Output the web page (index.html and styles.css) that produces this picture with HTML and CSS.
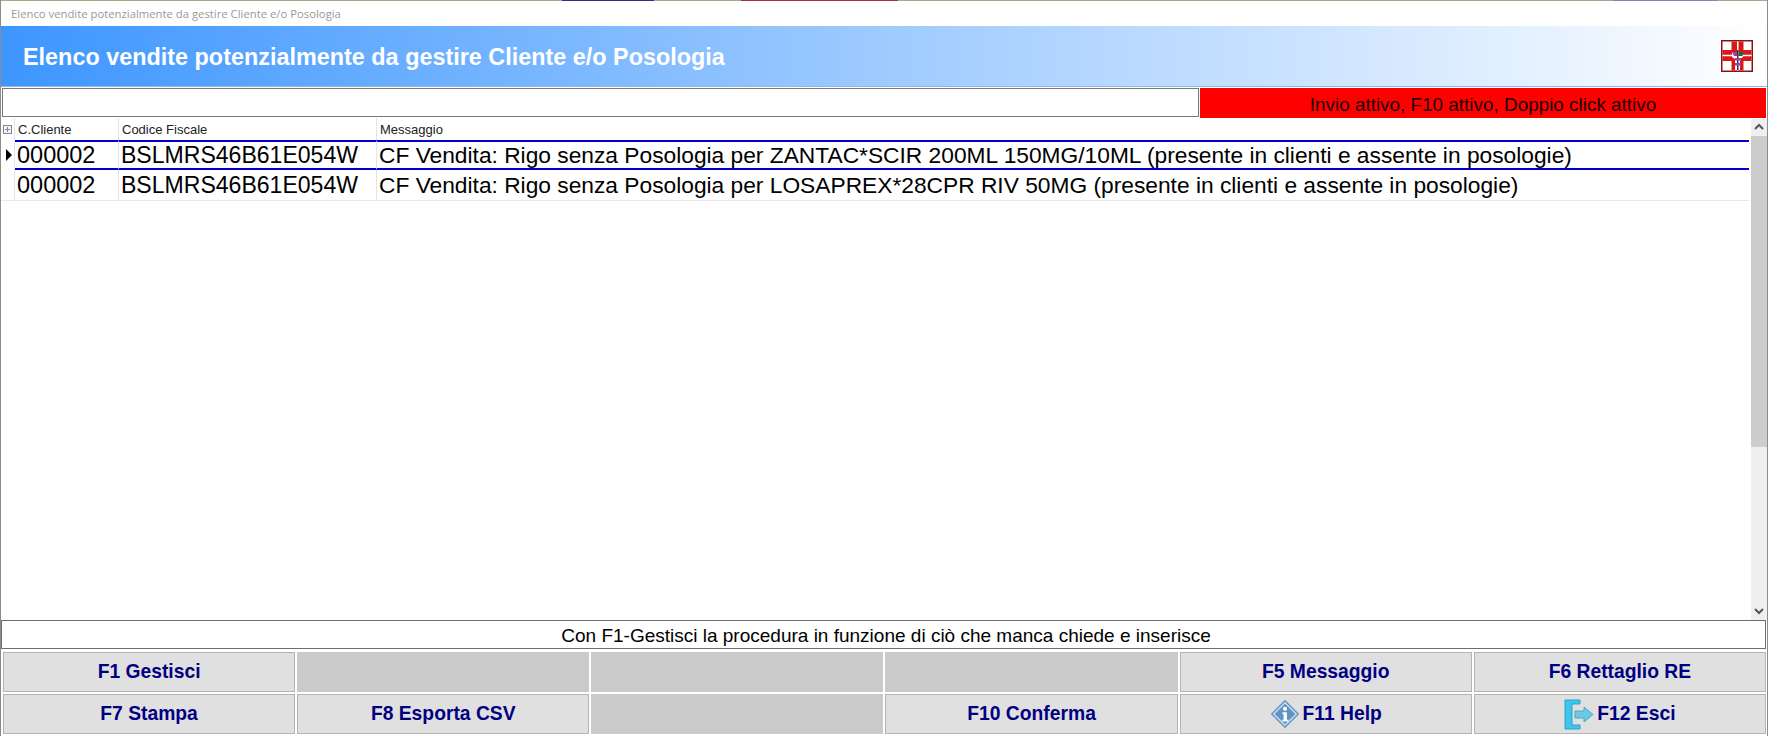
FILE: index.html
```html
<!DOCTYPE html>
<html lang="it">
<head>
  <meta charset="UTF-8">
  <title>Elenco vendite potenzialmente da gestire Cliente e/o Posologia</title>
  <link rel="stylesheet" href="styles.css">
</head>
<body>
  <div class="window">
    <div class="behind"></div>
    <div class="titlebar">Elenco vendite potenzialmente da gestire Cliente e/o Posologia</div>

    <div class="banner">
      <h1>Elenco vendite potenzialmente da gestire Cliente e/o Posologia</h1>
      <svg class="logo" width="32" height="32" viewBox="0 0 32 32">
        <rect x="0.75" y="0.75" width="30.5" height="30.5" fill="#fff" stroke="#8c1010" stroke-width="1.5"/>
        <rect x="10.500" y="1.500" width="12" height="29" fill="#d81818"/>
        <rect x="1.500" y="10" width="29" height="11" fill="#d81818"/>
        <rect x="16" y="1.500" width="1.500" height="29" fill="#fff"/>
        <rect x="1.500" y="14.750" width="29" height="1.500" fill="#fff"/>
        <path d="M11 12h11v5l-3 2v11h-5V19l-3-2z" fill="#fff"/>
        <rect x="16" y="10" width="1.500" height="20" fill="#333"/>
        <path d="M11 12h5v4h-3z" fill="#b030c0"/>
        <path d="M17.500 12h5l-1 4h-4z" fill="#1c6a30"/>
        <path d="M14 18h6v2.500h-6zM14 23h6v2.500h-6z" fill="#a040b0"/>
      </svg>
    </div>

    <div class="filter-row">
      <div class="filter-box"></div>
      <div class="filter-status">Invio attivo, F10 attivo, Doppio click attivo</div>
    </div>

    <div class="grid-area">
      <div class="grid">
        <div class="grid-head">
          <div class="col-mark">
            <span class="expander"></span>
          </div>
          <div class="col-code">C.Cliente</div>
          <div class="col-cf">Codice Fiscale</div>
          <div class="col-msg">Messaggio</div>
        </div>
        <div class="grid-row selected">
          <div class="col-mark"><span class="pointer"></span></div>
          <div class="col-code">000002</div>
          <div class="col-cf">BSLMRS46B61E054W</div>
          <div class="col-msg">CF Vendita: Rigo senza Posologia per ZANTAC*SCIR 200ML 150MG/10ML (presente in clienti e assente in posologie)</div>
        </div>
        <div class="grid-row">
          <div class="col-mark"></div>
          <div class="col-code">000002</div>
          <div class="col-cf">BSLMRS46B61E054W</div>
          <div class="col-msg">CF Vendita: Rigo senza Posologia per LOSAPREX*28CPR RIV 50MG (presente in clienti e assente in posologie)</div>
        </div>
      </div>
      <div class="scrollbar">
        <svg class="arrow" width="16" height="17" viewBox="0 0 16 17">
          <path d="M4 10l4-4 4 4" fill="none" stroke="#555" stroke-width="2"/>
        </svg>
        <div class="thumb"></div>
        <div class="track"></div>
        <svg class="arrow" width="16" height="17" viewBox="0 0 16 17">
          <path d="M4 6l4 4 4-4" fill="none" stroke="#555" stroke-width="2"/>
        </svg>
      </div>
    </div>

    <div class="hint">Con F1-Gestisci la procedura in funzione di ciò che manca chiede e inserisce</div>

    <div class="buttons">
      <div class="btn">F1 Gestisci</div>
      <div class="btn off"></div>
      <div class="btn off"></div>
      <div class="btn off"></div>
      <div class="btn">F5 Messaggio</div>
      <div class="btn">F6 Rettaglio RE</div>
      <div class="btn">F7 Stampa</div>
      <div class="btn">F8 Esporta CSV</div>
      <div class="btn off"></div>
      <div class="btn">F10 Conferma</div>
      <div class="btn">
        <svg width="30" height="30" viewBox="0 0 32 32">
          <path d="M16 1l15 15-15 15L1 16z" fill="#5f93c4" stroke="#8fa9c0"/>
          <path d="M16 4l12 12-12 12L4 16z" fill="none" stroke="#c9dff2" stroke-width="1.500"/>
          <circle cx="16" cy="10.500" r="2.200" fill="#fff"/>
          <path d="M13.500 14h4.500v8h1.500v2h-6.500v-2h1.500v-6h-1.500z" fill="#fff"/>
        </svg>
        <span>F11 Help</span>
      </div>
      <div class="btn">
        <svg width="30" height="31" viewBox="0 0 30 31">
          <path d="M1 1h15v4H8v21h8v4H1z" fill="#40c4ea" stroke="#25a5cf"/>
          <path d="M11 12h9V8l9 7.500-9 7.500v-4h-9z" fill="#6cc9e6" stroke="#47a9cc"/>
        </svg>
        <span>F12 Esci</span>
      </div>
    </div>
  </div>
</body>
</html>
```

FILE: styles.css
```css
/* Window frame */
html, body {
  margin: 0;
  height: 100%;
  background-color: #fff;
}

.window {
  display: flex;
  flex-direction: column;
  width: 1768px;
  height: 736px;
  box-sizing: border-box;
  border-left: 1px solid #8c8c8c;
  border-right: 1px solid #8c8c8c;
  font-family: "Liberation Sans", Arial, sans-serif;
  color: #000;
  overflow: hidden;
}

/* sliver of whatever sits behind the window */
.behind {
  flex: none;
  height: 1px;
  background: linear-gradient(to right,
    #a8a88c 561px, #2f2f80 561px, #2f2f80 653px,
    #a8a88c 653px, #a8a88c 740px, #a03040 740px, #a03040 897px,
    #a8a88c 897px, #a8a88c 1612px, #8088a8 1612px, #8088a8 1717px,
    #a8a88c 1717px);
}

.titlebar {
  height: 25px;
  line-height: 25px;
  padding-left: 10px;
  font-family: "Open Sans", sans-serif;
  font-size: 11.300px;
  color: #999;
}

/* Blue banner */
.banner {
  display: flex;
  align-items: center;
  justify-content: space-between;
  height: 61px;
  padding: 0 14px 0 22px;
  background: linear-gradient(to right, #3d96ff, #fff);
  border-bottom: 1px solid #8fb8e0;
  box-sizing: border-box;
}

.banner h1 {
  margin: 2px 0 0;
  font-size: 23.400px;
  font-weight: bold;
  color: #fff;
}

.logo {
  display: block;
}

/* Search row */
.filter-row {
  display: flex;
  gap: 1px;
  height: 31px;
  padding: 1px 1px 0;
  box-sizing: border-box;
}

.filter-box {
  width: 1197px;
  height: 29px;
  box-sizing: border-box;
  background-color: #fff;
  border: 1px solid #7a7a7a;
}

.filter-status {
  flex: 1;
  height: 30px;
  line-height: 33px;
  text-align: center;
  font-size: 18.900px;
  color: #200000;
  background-color: #f00;
}

/* Data grid */
.grid-area {
  display: flex;
  flex: 1;
  min-height: 0;
}

.grid {
  flex: 1;
}

.grid-head,
.grid-row {
  display: flex;
}

.grid-head {
  height: 22px;
  line-height: 24px;
  font-size: 13px;
  color: #222;
}

.grid-head .col-code,
.grid-head .col-cf,
.grid-head .col-msg {
  padding-left: 3px;
}

.grid-row {
  height: 31px;
  line-height: 31px;
  font-size: 22.750px;
  border-bottom: 1px solid #e8e8e8;
  box-sizing: border-box;
}

.col-mark {
  display: flex;
  align-items: center;
  justify-content: center;
  width: 13px;
  border-right: 1px solid #e4e4e4;
}

.col-code {
  width: 104px;
  padding-left: 2px;
  box-sizing: border-box;
  border-right: 1px solid #e4e4e4;
}

.grid-row .col-code {
  font-size: 23.500px;
}

.col-cf {
  width: 258px;
  padding-left: 2px;
  box-sizing: border-box;
  border-right: 1px solid #e4e4e4;
}

.grid-row .col-cf {
  font-size: 23.060px;
}

.col-msg {
  flex: 1;
  padding-left: 2px;
  white-space: nowrap;
}

.grid-row.selected {
  height: 30px;
  border-bottom: 0;
}

.grid-row.selected > div:not(.col-mark) {
  border-top: 2px solid #0000c8;
  border-bottom: 2px solid #0000c8;
  line-height: 26px;
  box-sizing: border-box;
}

.expander {
  width: 9px;
  height: 9px;
  box-sizing: border-box;
  border: 1px solid #808890;
  background: linear-gradient(#808890, #808890) center / 5px 1px no-repeat, linear-gradient(#808890, #808890) center / 1px 5px no-repeat, #f4f4f4;
}

.pointer {
  width: 0;
  height: 0;
  margin-left: 3px;
  border-left: 6px solid #000;
  border-top: 6px solid transparent;
  border-bottom: 6px solid transparent;
}

/* Scrollbar */
.scrollbar {
  display: flex;
  flex-direction: column;
  width: 16px;
  margin: 1px 0 0 2px;
  background-color: #efefef;
}

.arrow {
  display: block;
  flex: none;
}

.thumb {
  height: 311px;
  background-color: #cdcdcd;
}

.track {
  flex: 1;
}

/* Hint line */
.hint {
  height: 29px;
  line-height: 29px;
  margin: 0 1px 0 0;
  padding-left: 5px;
  box-sizing: border-box;
  border: 1px solid #6e6e6e;
  text-align: center;
  font-size: 19px;
}

/* Function keys */
.buttons {
  display: grid;
  grid-template-columns: repeat(6, 1fr);
  grid-auto-rows: 40px;
  gap: 2px;
  padding: 3px 1px 2px 2px;
}

.btn {
  display: flex;
  align-items: center;
  justify-content: center;
  gap: 3px;
  box-sizing: border-box;
  border: 1px solid #b4b4b4;
  background-color: #e0e0e0;
  color: #000080;
  font-size: 19.300px;
  font-weight: bold;
}

.btn.off {
  border-color: #cacaca;
  background-color: #cacaca;
}

.btn svg {
  display: block;
}
```
